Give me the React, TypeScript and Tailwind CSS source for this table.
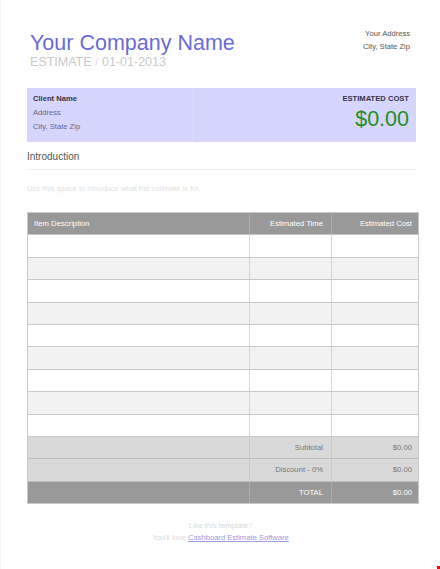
import React from "react";

const rows = Array.from({ length: 9 }, (_, i) => i);

function Row({
  bg,
  left,
  mid,
  right,
  text = "text-[#777]",
  line = "border-[#c8c8c8]",
  divider = "border-[#d6d6d6]",
}: {
  bg: string;
  left?: string;
  mid?: string;
  right?: string;
  text?: string;
  line?: string;
  divider?: string;
}) {
  return (
    <div className={`grid grid-cols-[221px_82px_1fr] h-[22.4px] border-b ${line} ${bg} ${text}`}>
      <div className="flex items-center pl-[6px]">{left}</div>
      <div className={`flex items-center justify-end pr-[8px] border-l ${divider}`}>{mid}</div>
      <div className={`flex items-center justify-end pr-[6px] border-l ${divider}`}>{right}</div>
    </div>
  );
}

export default function App() {
  return (
    <div
      className="relative h-[569px] w-[440px] bg-white border-l border-[#f5f5fb] overflow-hidden"
      style={{ fontFamily: '"Liberation Sans", Arial, sans-serif' }}
    >
      <div className="px-[25px] pt-[27px]">
        {/* Header */}
        <div className="flex justify-between items-start">
          <div className="pt-[3.5px] pl-[4px]">
            <h1 className="text-[21.5px] leading-[24px] text-[#6b6bd3]">Your Company Name</h1>
            <p className="text-[12.5px] leading-[14px] text-[#c9c9c9]">
              ESTIMATE <span className="text-[#e2e2e2]">/</span> 01-01-2013
            </p>
          </div>
          <div className="text-right text-[7.6px] leading-[13px] text-[#555] pr-[5px]">
            <p>Your Address</p>
            <p>City, State Zip</p>
          </div>
        </div>

        {/* Client box */}
        <div className="mt-[19.5px] ml-[1px] w-[389px] h-[54px] bg-[#d6d6fc] grid grid-cols-[166px_1fr]">
          <div className="pl-[6px] pt-[4px] text-[7.6px] leading-[14px] text-[#666688] border-r border-[#dadafc]">
            <p className="font-bold text-[#33334f]">Client Name</p>
            <p>Address</p>
            <p>City, State Zip</p>
          </div>
          <div className="pr-[7px] pt-[4px] text-right">
            <p className="text-[7.6px] leading-[14px] font-bold text-[#33334f]">ESTIMATED COST</p>
            <p className="mt-[2px] text-[21.5px] leading-[22px] text-[#1e8f1e]">$0.00</p>
          </div>
        </div>

        {/* Introduction */}
        <div className="ml-[1px] w-[389px]">
          <h2 className="mt-[9px] text-[10px] leading-[12px] text-[#555] pb-[6px] border-b border-[#eeeeee]">
            Introduction
          </h2>
          <p className="mt-[13px] text-[7.6px] leading-[12px] text-[#e0e0e0]">
            Use this space to introduce what the estimate is for.
          </p>
        </div>

        {/* Table */}
        <div className="mt-[17px] ml-[1px] w-[392px] border-x border-t border-[#c8c8c8] text-[7.7px]">
          <Row
            bg="bg-[#999999]"
            text="text-white"
            divider="border-[#ababab]"
            left="Item Description"
            mid="Estimated Time"
            right="Estimated Cost"
          />
          {rows.map((i) => (
            <Row key={i} bg={i % 2 === 0 ? "bg-white" : "bg-[#f2f2f2]"} />
          ))}
          <Row bg="bg-[#d9d9d9]" line="border-[#bdbdbd]" divider="border-[#cacaca]" mid="Subtotal" right="$0.00" />
          <Row bg="bg-[#d9d9d9]" line="border-[#bdbdbd]" divider="border-[#cacaca]" mid="Discount - 0%" right="$0.00" />
          <Row
            bg="bg-[#999999]"
            text="text-white"
            divider="border-[#ababab]"
            mid="TOTAL"
            right="$0.00"
          />
        </div>

        {/* Footer */}
        <div className="mt-[16px] text-center text-[7.6px] leading-[11.5px] text-[#d8d8d8]">
          <p>Like this template?</p>
          <p>
            You'll love{" "}
            <a href="#" className="underline text-[#9a9ae0]">
              Cashboard Estimate Software
            </a>
          </p>
        </div>
      </div>

      <div className="absolute left-[436px] top-[566px] w-[3px] h-[3px] bg-[#ff0000]" />
    </div>
  );
}
